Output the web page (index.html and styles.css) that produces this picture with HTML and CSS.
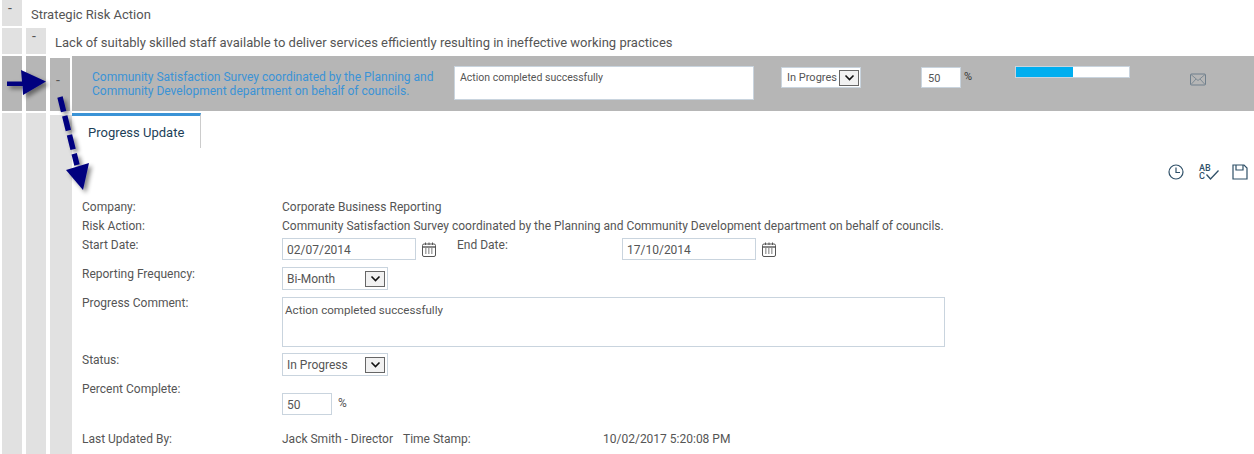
FILE: index.html
```html
<!DOCTYPE html>
<html lang="en">
<head>
    <meta charset="UTF-8">
    <title>Strategic Risk Action</title>
    <link rel="stylesheet" href="styles.css">
</head>
<body>
    <div class="tree-row row-one">
        <div class="toggle">-</div>
        <div class="tree-title">Strategic Risk Action</div>
    </div>
    <div class="tree-row row-two">
        <div class="toggle"></div>
        <div class="toggle">-</div>
        <div class="tree-title">Lack of suitably skilled staff available to deliver services efficiently resulting in ineffective working practices</div>
    </div>
    <div class="tree-row row-three">
        <div class="toggle dark"></div>
        <div class="toggle dark"></div>
        <div class="toggle dark third">-</div>
        <div class="action-bar">
            <a class="action-name">Community Satisfaction Survey coordinated by the Planning and Community Development department on behalf of councils.</a>
            <div class="action-comment">Action completed successfully</div>
            <div class="select bar-select"><span>In Progres</span><i class="select-btn"><svg width="11" height="7" viewBox="0 0 11 7"><path d="M1.5 1.5 5.5 5.5 9.5 1.5" fill="none" stroke="#111" stroke-width="1.6"/></svg></i></div>
            <div class="bar-percent">50</div>
            <span class="percent-sign">%</span>
            <div class="progress"><div class="progress-fill" style="width: 50%"></div></div>
            <svg class="mail-icon" width="16" height="13" viewBox="0 0 16 13"><rect x="0.5" y="1" width="15" height="11" rx="1" fill="none" stroke="#6f7f8c"/><path d="M1 1.500 8 7.500 15 1.500M1 11.500 6 6M15 11.500 10 6" fill="none" stroke="#6f7f8c" stroke-width="0.8"/></svg>
        </div>
    </div>
    <div class="tree-row row-four">
        <div class="toggle"></div>
        <div class="toggle"></div>
        <div class="toggle third wide"></div>
        <div class="panel">
            <div class="tab">Progress Update</div>
            <div class="tools">
                <svg width="16" height="16" viewBox="0 0 16 16"><circle cx="8" cy="8" r="7" fill="none" stroke="#2f5068" stroke-width="1.2"/><path d="M8 3.500V8.500H12" fill="none" stroke="#2f5068" stroke-width="1.2"/></svg>
                <div class="spell"><span class="spell-text">AB<br>C</span><svg width="13" height="10" viewBox="0 0 13 10"><path d="M0.500 4.500 4.500 9 12.500 0.500" fill="none" stroke="#2f5068" stroke-width="1.300"/></svg></div>
                <svg width="16" height="16" viewBox="0 0 16 16"><path d="M1 1H12L15 4V15H1Z" fill="none" stroke="#2f5068" stroke-width="1.2"/><path d="M4 1V6H11V1" fill="none" stroke="#2f5068" stroke-width="1.2"/></svg>
            </div>
            <div class="form">
                <div class="form-row company-row"><label>Company:</label><span>Corporate Business Reporting</span></div>
                <div class="form-row action-row"><label>Risk Action:</label><span>Community Satisfaction Survey coordinated by the Planning and Community Development department on behalf of councils.</span></div>
                <div class="form-row date-row">
                    <label>Start Date:</label>
                    <div class="input date-input">02/07/2014</div>
                    <svg class="cal" width="14" height="15" viewBox="0 0 14 15"><use href="#cal-icon"/></svg>
                    <label class="end-label">End Date:</label>
                    <div class="input date-input">17/10/2014</div>
                    <svg class="cal" width="14" height="15" viewBox="0 0 14 15"><use href="#cal-icon"/></svg>
                </div>
                <div class="form-row freq-row">
                    <label>Reporting Frequency:</label>
                    <div class="select form-select"><span>Bi-Month</span><i class="select-btn"><svg width="11" height="7" viewBox="0 0 11 7"><path d="M1.5 1.5 5.5 5.5 9.5 1.5" fill="none" stroke="#111" stroke-width="1.6"/></svg></i></div>
                </div>
                <div class="form-row comment-row">
                    <label>Progress Comment:</label>
                    <div class="input comment-input">Action completed successfully</div>
                </div>
                <div class="form-row status-row">
                    <label>Status:</label>
                    <div class="select form-select"><span>In Progress</span><i class="select-btn"><svg width="11" height="7" viewBox="0 0 11 7"><path d="M1.5 1.5 5.5 5.5 9.5 1.5" fill="none" stroke="#111" stroke-width="1.6"/></svg></i></div>
                </div>
                <div class="form-row percent-row">
                    <label>Percent Complete:</label>
                    <div class="percent-value"><div class="input percent-input">50</div><span class="percent-mark">%</span></div>
                </div>
                <div class="form-row updated-row">
                    <label>Last Updated By:</label>
                    <span class="updated-by">Jack Smith - Director</span>
                    <span class="stamp-label">Time Stamp:</span>
                    <span>10/02/2017 5:20:08 PM</span>
                </div>
            </div>
        </div>
    </div>

    <!-- Annotation arrows drawn over the tree -->
    <svg class="arrows" width="120" height="200" viewBox="0 0 120 200">
        <defs>
            <filter id="arrow-shadow" x="-30%" y="-30%" width="170%" height="170%">
                <feDropShadow dx="3" dy="3" stdDeviation="2" flood-color="#000" flood-opacity="0.45"/>
            </filter>
            <symbol id="cal-icon" viewBox="0 0 14 15">
                <rect x="0.5" y="2" width="13" height="12.5" rx="1.5" fill="none" stroke="#555"/>
                <path d="M0.5 5H13.5" stroke="#555" stroke-width="1.4"/>
                <path d="M3.5 0.5V3M7 0.5V3M10.5 0.5V3" stroke="#555"/>
                <path d="M3 7H5M6 7H8M9 7H11M3 9H5M6 9H8M9 9H11M3 11H5M6 11H8M9 11H11" stroke="#555" stroke-dasharray="1.2 0.4"/>
            </symbol>
        </defs>
        <g filter="url(#arrow-shadow)">
            <path d="M7 81.500H22L21 70 46 81.500 23 95 22.500 86H7Z" fill="#00007f"/>
            <path d="M60 97 77 165" fill="none" stroke="#00007f" stroke-width="5.500" stroke-dasharray="15 4.500"/>
            <path d="M66 170 89 163 83 190Z" fill="#00007f"/>
        </g>
    </svg>
</body>
</html>
```

FILE: styles.css
```css
body {
    margin: 0;
    height: 454px;
    overflow: hidden;
    position: relative;
    background: #fff;
    font-family: Roboto, "Liberation Sans", sans-serif;
    font-size: 12px;
    color: #555;
}
.tree-row {
    display: flex;
    padding-left: 2px;
    column-gap: 4px;
    margin-bottom: 2px;
}
.row-one, .row-two {
    height: 26px;
}
.row-three {
    height: 55px;
}
.row-four {
    height: 341px;
    margin-bottom: 0;
}
.toggle {
    box-sizing: border-box;
    width: 20px;
    flex: none;
    padding-right: 4px;
    background: #e1e1e1;
    text-align: center;
    line-height: 16px;
    font-size: 14px;
}
.toggle.dark {
    background: #b6b6b6;
}
.toggle.third {
    margin-top: 2px;
}
.toggle.dark.third {
    line-height: 44px;
}
.toggle.wide {
    width: 22px;
}
.tree-title {
    margin-left: 5px;
    font-size: 13px;
    line-height: 30px;
}

/* grey action bar */
.action-bar {
    flex: 1;
    margin-left: -2px;
    background: #b6b6b6;
    display: flex;
    align-items: flex-start;
}
.action-name {
    width: 362px;
    margin: 14px 0 0 20px;
    font-size: 12px;
    line-height: 14px;
    color: #3a93d6;
}
.action-comment {
    width: 288px;
    height: 32px;
    margin: 10px 0 0 0;
    padding: 0 5px;
    background: #fff;
    border: 1px solid #c9d4de;
    font-size: 10.5px;
    line-height: 21px;
}
.select {
    display: flex;
    align-items: center;
    justify-content: space-between;
    box-sizing: border-box;
    background: #fff;
    border: 1px solid #c9d4de;
}
.select-btn {
    box-sizing: border-box;
    display: flex;
    align-items: center;
    justify-content: center;
    width: 20px;
    height: 16px;
    border: 1px solid #666;
    background: #f1f1f1;
}
.bar-select {
    width: 80px;
    height: 21px;
    margin: 11px 0 0 27px;
    padding: 0 1px 0 5px;
    font-size: 11px;
}
.bar-percent {
    box-sizing: border-box;
    width: 40px;
    height: 21px;
    margin: 11px 0 0 60px;
    padding: 4px 0 0 6px;
    background: #fff;
    border: 1px solid #c9d4de;
    font-size: 11px;
}
.percent-sign {
    margin: 14px 0 0 3px;
    font-size: 11px;
    color: #333;
}
.progress {
    box-sizing: border-box;
    width: 115px;
    height: 12px;
    margin: 10px 0 0 43px;
    background: #fff;
    border: 1px solid #c9d4de;
}
.progress-fill {
    height: 100%;
    background: #00aeef;
}
.mail-icon {
    margin: 17px 0 0 60px;
}

/* panel below the bar */
.panel {
    flex: 1;
    margin-left: -4px;
    min-width: 0;
}
.tab {
    box-sizing: border-box;
    width: 129px;
    height: 35px;
    padding-left: 16px;
    border-top: 3px solid #3a93d6;
    border-right: 1px solid #ccc;
    line-height: 33px;
    font-size: 13px;
    color: #1d3f58;
}
.tools {
    display: flex;
    justify-content: flex-end;
    align-items: center;
    column-gap: 15px;
    height: 16px;
    margin-top: 16px;
    padding-right: 6px;
}
.spell {
    display: flex;
    align-items: flex-end;
    width: 18px;
}
.spell svg {
    margin-left: -5px;
    flex: none;
}
.spell-text {
    font-size: 9px;
    line-height: 8px;
    font-weight: 500;
    color: #2f5068;
}
.form {
    margin-top: 20px;
    padding-left: 10px;
}
.form-row {
    display: flex;
    align-items: flex-start;
}
.form-row label {
    width: 200px;
    flex: none;
}
.company-row {
    height: 19px;
}
.action-row {
    height: 18px;
}
.date-row {
    height: 30px;
}
.date-row label {
    margin-top: 1px;
}
.freq-row {
    height: 29px;
}
.comment-row {
    height: 57px;
}
.status-row {
    height: 29px;
}
.percent-row {
    height: 50px;
}
.input {
    box-sizing: border-box;
    border: 1px solid #c9d4de;
    background: #fff;
}
.date-input {
    width: 134px;
    height: 22px;
    margin-top: 1px;
    padding: 4px 0 0 4px;
}
.cal {
    margin: 5px 0 0 6px;
}
.end-label.end-label {
    width: 165px;
    margin-left: 21px;
}
.form-select {
    width: 106px;
    height: 23px;
    padding: 0 2px 0 4px;
}
.comment-input {
    width: 663px;
    height: 50px;
    margin-top: 1px;
    padding: 5px 2px;
    font-size: 11.6px;
}
.percent-value {
    display: flex;
    margin-top: 11px;
}
.percent-input {
    width: 50px;
    height: 22px;
    padding: 4px 0 0 4px;
}
.percent-mark {
    margin: 3px 0 0 6px;
}
.updated-by {
    width: 121px;
}
.stamp-label {
    width: 200px;
}
.arrows {
    position: absolute;
    left: 0;
    top: 0;
}
```
